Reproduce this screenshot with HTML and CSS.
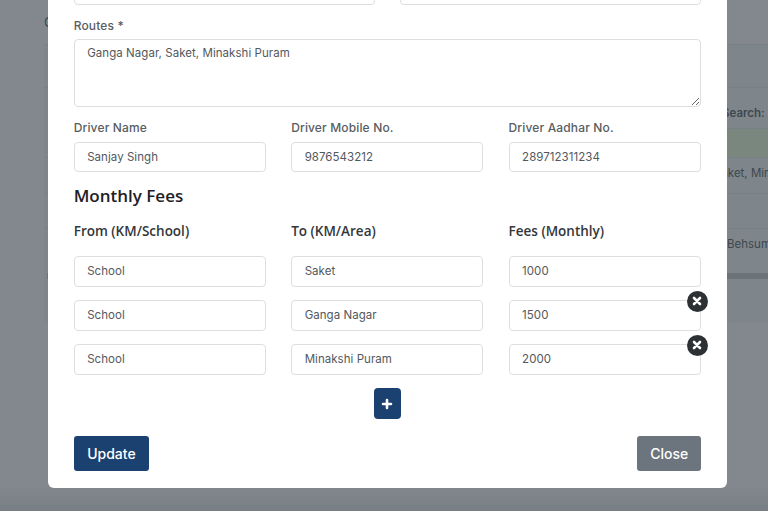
FILE: index.html
```html
<!DOCTYPE html>
<html lang="en">
<head>
    <meta charset="UTF-8">
    <meta name="viewport" content="width=device-width, initial-scale=1.0">
    <title>Edit Route</title>
    <link rel="stylesheet" href="styles.css">
</head>
<body>
    <div class="page">
        <div class="page-title">C</div>
        <div class="card">
            <div class="card-row row-head"></div>
            <div class="card-row row-search">Search:</div>
            <div class="card-row row-green"></div>
            <div class="card-row row-text row-first">Saket, Minakshi Puram</div>
            <div class="card-row row-blank"></div>
            <div class="card-row row-text">Behsum, Delhi</div>
            <div class="scrollbar"></div>
            <div class="card-row row-foot"></div>
        </div>
    </div>

    <div class="overlay">
        <form class="modal">
            <div class="grid two">
                <div class="field"><input class="input" type="text" value=""></div>
                <div class="field"><input class="input" type="text" value=""></div>
            </div>

            <label class="label label-routes">Routes *</label>
            <textarea class="input area">Ganga Nagar, Saket, Minakshi Puram</textarea>

            <div class="grid three driver">
                <div class="field">
                    <label class="label">Driver Name</label>
                    <input class="input" type="text" value="Sanjay Singh">
                </div>
                <div class="field">
                    <label class="label">Driver Mobile No.</label>
                    <input class="input" type="text" value="9876543212">
                </div>
                <div class="field">
                    <label class="label">Driver Aadhar No.</label>
                    <input class="input" type="text" value="289712311234">
                </div>
            </div>

            <h3 class="fees-title">Monthly Fees</h3>

            <div class="grid three fees-head">
                <div>From (KM/School)</div>
                <div>To (KM/Area)</div>
                <div>Fees (Monthly)</div>
            </div>

            <div class="grid three fee-row">
                <input class="input" type="text" value="School">
                <input class="input" type="text" value="Saket">
                <div class="fee-cell"><input class="input" type="text" value="1000"></div>
            </div>
            <div class="grid three fee-row">
                <input class="input" type="text" value="School">
                <input class="input" type="text" value="Ganga Nagar">
                <div class="fee-cell">
                    <input class="input" type="text" value="1500">
                    <button class="remove" type="button">
                        <svg viewBox="0 0 12 12" width="12" height="12"><path d="M3 3l6 6M9 3l-6 6" stroke="#fff" stroke-width="2.6" stroke-linecap="round"/></svg>
                    </button>
                </div>
            </div>
            <div class="grid three fee-row">
                <input class="input" type="text" value="School">
                <input class="input" type="text" value="Minakshi Puram">
                <div class="fee-cell">
                    <input class="input" type="text" value="2000">
                    <button class="remove" type="button">
                        <svg viewBox="0 0 12 12" width="12" height="12"><path d="M3 3l6 6M9 3l-6 6" stroke="#fff" stroke-width="2.6" stroke-linecap="round"/></svg>
                    </button>
                </div>
            </div>

            <div class="add-wrap">
                <button class="add" type="button">
                    <svg viewBox="0 0 12 12" width="12" height="12"><path d="M6 2v8M2 6h8" stroke="#fff" stroke-width="2.6" stroke-linecap="round"/></svg>
                </button>
            </div>

            <div class="actions">
                <button class="btn btn-primary" type="button">Update</button>
                <button class="btn btn-grey" type="button">Close</button>
            </div>
        </form>
    </div>
</body>
</html>
```

FILE: styles.css
```css
* {
    box-sizing: border-box;
}

body {
    margin: 0;
    height: 100vh;
    overflow: hidden;
    font-family: "Inter", "Liberation Sans", sans-serif;
    background: linear-gradient(180deg, #82888e 0%, #82888e 95%, #777e84 100%);
}

/* page behind the modal */
.page {
    height: 100vh;
    padding: 16px 0 0 44px;
}

.page-title {
    font-size: 13px;
    line-height: 13px;
    color: #3c4650;
    margin-bottom: 15px;
}

.card {
    background: #7e868c;
    height: 279px;
    color: #3f484e;
    font-size: 11.5px;
    white-space: nowrap;
    overflow: hidden;
}

.card-row {
    padding-left: 678px;
    border-top: 1px solid #788087;
}

.row-head {
    height: 43px;
}

.row-search {
    height: 41px;
    padding-top: 18px;
    font-weight: 600;
}

.row-green {
    height: 29px;
    margin-left: 5px;
    background: #79877f;
}

.row-text {
    height: 36px;
    padding-top: 8px;
    padding-left: 683px;
}

.row-first {
    padding-left: 670px;
}

.row-blank {
    height: 35px;
}

.scrollbar {
    height: 6px;
    margin: 9px 0 0 3px;
    background: #6c7479;
}

.row-foot {
    height: 45px;
    border-top: 0;
}

/* modal */
.overlay {
    position: absolute;
    top: 0;
    left: 0;
    width: 100%;
    height: 100%;
    display: flex;
    align-items: flex-end;
    padding: 0 0 23px 48px;
}

.modal {
    width: 679px;
    flex-shrink: 0;
    background: #fff;
    border-radius: 6px;
    padding: 0 26.3px 17px 25.7px;
}

.grid {
    display: grid;
    column-gap: 25.3px;
}

.grid.two {
    grid-template-columns: 1fr 1fr;
}

.grid.three {
    grid-template-columns: repeat(3, 1fr);
}

.label {
    display: block;
    font-size: 12px;
    line-height: 16px;
    font-weight: 500;
    letter-spacing: 0.15px;
    color: #585d62;
    margin-bottom: 6px;
}

.input {
    display: block;
    width: 100%;
    height: 30.5px;
    padding: 0 12.5px;
    border: 1px solid #dcdfe2;
    border-radius: 4px;
    background: #fff;
    font-family: inherit;
    font-size: 11.5px;
    letter-spacing: 0.05px;
    color: #53585d;
    outline: none;
}

.label-routes {
    margin-top: 13px;
    margin-bottom: 5px;
}

.area {
    height: 68px;
    padding: 5px 12.5px;
    line-height: 16px;
    margin-bottom: 13px;
}

.fees-title {
    margin: 15px 0 17px;
    font-family: "Open Sans", sans-serif;
    font-size: 17px;
    line-height: 18px;
    font-weight: 600;
    color: #1d2024;
}

.fees-head {
    font-family: "Open Sans", sans-serif;
    font-size: 13.5px;
    line-height: 18px;
    font-weight: 600;
    color: #33373b;
    margin-bottom: 16px;
}

.fee-row {
    margin-bottom: 13.5px;
}

.fee-cell {
    position: relative;
}

.remove {
    position: absolute;
    top: -9.5px;
    right: -7px;
    width: 21px;
    height: 21px;
    padding: 0;
    border: 0;
    border-radius: 50%;
    background: #2e3133;
    display: flex;
    align-items: center;
    justify-content: center;
}

.add-wrap {
    display: flex;
    justify-content: center;
    margin-bottom: 17px;
}

.add {
    width: 27px;
    height: 31px;
    padding: 0;
    border: 0;
    border-radius: 4px;
    background: #1b4170;
    display: flex;
    align-items: center;
    justify-content: center;
}

.actions {
    display: flex;
    justify-content: space-between;
    margin-right: -0.7px;
}

.btn {
    height: 35px;
    padding: 0 13px;
    border: 0;
    border-radius: 3px;
    font-family: inherit;
    font-size: 14px;
    font-weight: 500;
    color: #fff;
}

.btn-primary {
    width: 75.5px;
    background: #1b4170;
}

.btn-grey {
    width: 64.5px;
    background: #6c757d;
}
```
